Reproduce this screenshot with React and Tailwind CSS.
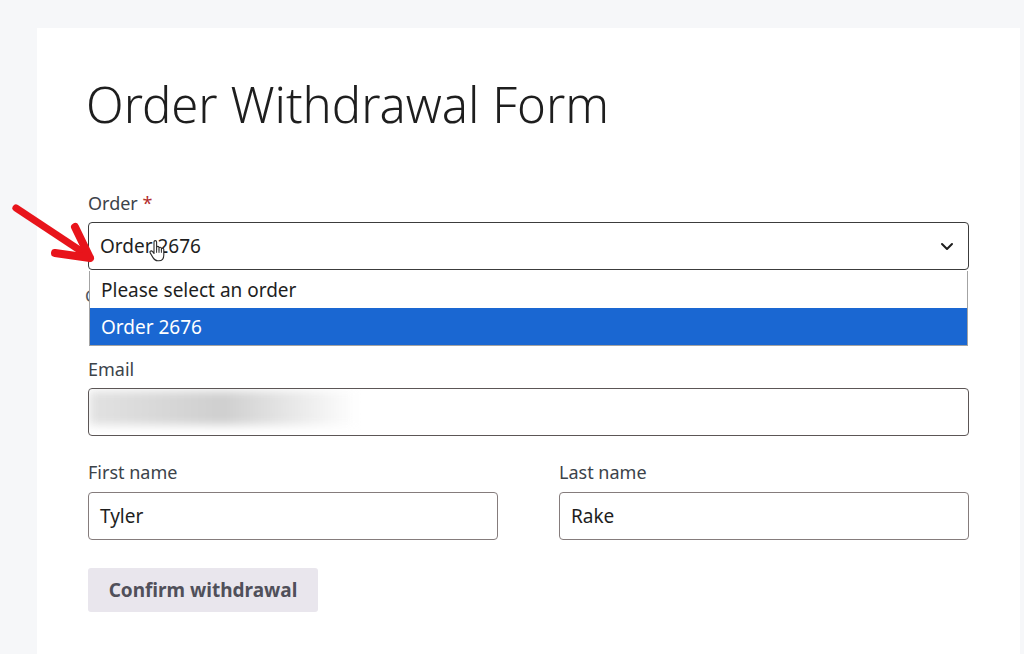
import { useState } from 'react';

const font = { fontFamily: '"Noto Sans", "Open Sans", sans-serif' };

function Chevron() {
  return (
    <svg width="14" height="9" viewBox="0 0 14 9" fill="none">
      <path d="M2 2l5 5 5-5" stroke="#1e1e1e" strokeWidth="2" strokeLinecap="round" strokeLinejoin="round" />
    </svg>
  );
}

// pointer cursor hovering over the select
function HandCursor() {
  return (
    <svg width="17" height="22" viewBox="0 0 17 22" className="absolute left-[148px] top-[240px]">
      <path
        d="M6 2C6 1.2 6.6.6 7.3.6S8.6 1.2 8.6 2v7.5V7.6c0-.7.6-1.2 1.2-1.2s1.2.5 1.2 1.2v2.2V8.5c0-.7.6-1.2 1.2-1.2s1.2.5 1.2 1.2v1.8-.9c0-.7.6-1.2 1.2-1.2s1.2.5 1.2 1.2V15c0 3.4-2 5.8-5 5.8H9.6c-2.3 0-3.5-1.4-4.6-3.2L2.2 12.9c-.5-.8-.2-1.6.5-1.9.7-.3 1.4 0 1.9.7L6 13.5Z"
        fill="#fff"
        stroke="#2b2b2b"
        strokeWidth="1.1"
        strokeLinejoin="round"
      />
      <path d="M8.6 9.6v3.2M11 9.8v3M13.4 10.2v2.6" stroke="#2b2b2b" strokeWidth="1" />
    </svg>
  );
}

function RedArrow() {
  return (
    <svg width="100" height="70" viewBox="0 0 100 70" className="absolute left-0 top-[195px]">
      <path d="M16 13L84 58" stroke="#e8141b" strokeWidth="7" strokeLinecap="round" />
      <path d="M90 63L75 32M90 63L55 58" stroke="#e8141b" strokeWidth="8" strokeLinecap="round" />
    </svg>
  );
}

function Label({ children, required }) {
  return (
    <label className="block text-[18px] leading-[24px] text-[#3c434a]">
      {children}
      {required && <span className="text-[#b32d2e]"> *</span>}
    </label>
  );
}

function TextInput({ value }) {
  return (
    <div className="h-[48px] w-full rounded-[4px] border border-[#857c7c] bg-white px-[11px] flex items-center text-[19px] text-[#1e1e1e]">
      {value}
    </div>
  );
}

export default function App() {
  const [order] = useState('Order 2676');
  const options = ['Please select an order', 'Order 2676'];

  return (
    <div className="relative min-h-screen bg-[#f6f7f9] pt-[28px] pl-[37px] pr-[4px]" style={font}>
      <div className="min-h-[626px] bg-white px-[51px] pt-[47px]">
        <h1 className="text-[49px] leading-[58px] font-light text-[#1e1e1e] -ml-[2px]">Order Withdrawal Form</h1>

        <div className="mt-[58px]">
          <Label required>Order</Label>
          <div className="relative mt-[7px]">
            <div className="h-[48px] w-full rounded-[4px] border border-[#3c3c3c] bg-white pl-[11px] pr-[14px] flex items-center justify-between text-[19px] text-[#1e1e1e]">
              <span>{order}</span>
              <Chevron />
            </div>
            <ul className="absolute left-[1px] right-[1px] top-[49px] z-10 border border-t-0 border-[#a3a3a3] bg-white text-[19px]">
              {options.map((o) => (
                <li
                  key={o}
                  className={
                    o === order
                      ? 'h-[37px] px-[11px] pt-[1px] flex items-center bg-[#1a67d2] text-white'
                      : 'h-[37px] px-[11px] pt-[2px] flex items-center text-[#1e1e1e]'
                  }
                >
                  {o}
                </li>
              ))}
            </ul>
          </div>
          <p className="mt-[14px] -ml-[3px] text-[17px] leading-[24px] text-[#50575e]">Choose the order you want to withdraw.</p>
        </div>

        <div className="mt-[49px]">
          <Label>Email</Label>
          <div className="relative mt-[7px] h-[48px] w-full rounded-[4px] border border-[#5c5656] bg-white overflow-hidden">
            <div className="absolute left-0 top-[2px] h-[34px] w-[268px] bg-gradient-to-r from-[#e2e2e2] via-[#cfcfcf] to-[#ffffff] blur-[5px]" />
          </div>
        </div>

        <div className="mt-[24px] grid grid-cols-2 gap-x-[61px]">
          <div>
            <Label>First name</Label>
            <div className="mt-[8px]">
              <TextInput value="Tyler" />
            </div>
          </div>
          <div>
            <Label>Last name</Label>
            <div className="mt-[8px]">
              <TextInput value="Rake" />
            </div>
          </div>
        </div>

        <button
          type="button"
          className="mt-[28px] h-[44px] w-[230px] rounded-[3px] bg-[#e9e6ed] text-[19px] font-bold text-[#50505a]"
        >
          Confirm withdrawal
        </button>
      </div>

      <RedArrow />
      <HandCursor />
    </div>
  );
}
